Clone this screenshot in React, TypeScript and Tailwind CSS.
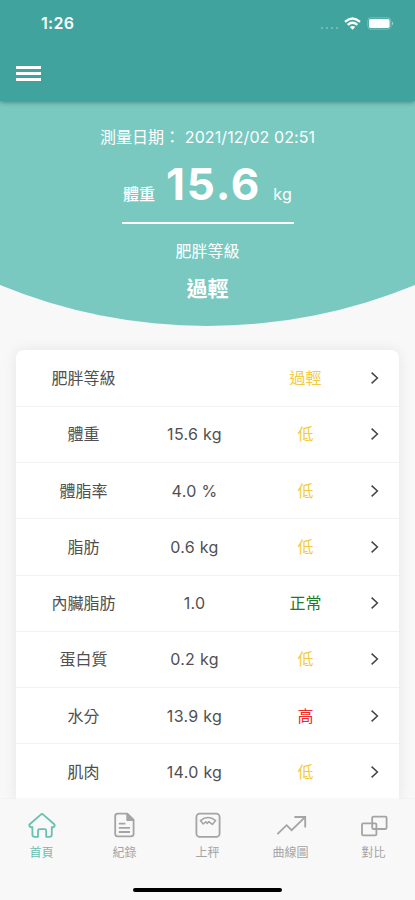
import React from "react";

type Measure = {
  label: string;
  value?: string;
  status: string;
  color: string;
};

const YELLOW = "text-[#f3cb3d]";

const measures: Measure[] = [
  { label: "肥胖等級", status: "過輕", color: YELLOW },
  { label: "體重", value: "15.6 kg", status: "低", color: YELLOW },
  { label: "體脂率", value: "4.0 %", status: "低", color: YELLOW },
  { label: "脂肪", value: "0.6 kg", status: "低", color: YELLOW },
  { label: "內臟脂肪", value: "1.0", status: "正常", color: "text-[#1f7a26]" },
  { label: "蛋白質", value: "0.2 kg", status: "低", color: YELLOW },
  { label: "水分", value: "13.9 kg", status: "高", color: "text-[#ee2a2a]" },
  { label: "肌肉", value: "14.0 kg", status: "低", color: YELLOW },
];

const HomeIcon = () => (
  <path d="M14 2 Q14.6 2 15.2 2.6 L26 12 Q27.4 13.4 26 14.8 Q25.2 15.5 23.8 15.1 V22.4 Q23.8 24.8 21.4 24.8 H18.2 V19 Q18.2 17.2 16.6 17.2 H11.6 Q10 17.2 10 19 V24.8 H6.8 Q4.4 24.8 4.4 22.4 V15.1 Q2.8 15.5 2 14.8 Q.6 13.4 2 12 L12.8 2.6 Q13.4 2 14 2 Z" />
);

const RecordIcon = () => (
  <>
    <path d="M6.8 1.6 H16.2 L22.6 8 V21.8 Q22.6 24.4 20 24.4 H6.8 Q4.2 24.4 4.2 21.8 V4.2 Q4.2 1.6 6.8 1.6 Z" />
    <path d="M16.2 1.8 V8 H22.4 Z" fill="currentColor" />
    <path d="M7.8 11.6 H14.4 M7.8 15.8 H19 M7.8 20 H19" />
  </>
);

const ScaleIcon = () => (
  <>
    <rect x="2.4" y="1.6" width="23.2" height="23.2" rx="3.4" />
    <path d="M6.4 8.6 Q14 2.4 21.6 8.6 L18.4 12.4 L14.8 9.6 L13.2 11.4 L11.8 9.8 L9.2 12 Z" strokeWidth="1.5" />
  </>
);

const ChartIcon = () => (
  <path d="M.4 22.2 L9.6 13.2 L14.6 18.2 L27.8 5.4 M17.4 5 H28.2 V15.6" strokeLinejoin="miter" />
);

const CompareIcon = () => (
  <>
    <rect x="2" y="11.4" width="14.4" height="12" rx="1.2" />
    <rect x="12.2" y="4.6" width="14.4" height="12.4" rx="1.2" />
  </>
);

const tabs = [
  { label: "首頁", icon: HomeIcon, active: true },
  { label: "紀錄", icon: RecordIcon, active: false },
  { label: "上秤", icon: ScaleIcon, active: false },
  { label: "曲線圖", icon: ChartIcon, active: false },
  { label: "對比", icon: CompareIcon, active: false },
];

const Header: React.FC = () => (
  <header className="relative z-10 h-[101px] shrink-0 bg-[#40a39d] text-white shadow-[0_1px_5px_rgba(0,0,0,0.4)]">
    <div className="flex h-[46px] items-center justify-between pl-[41px] pr-[21px]">
      <span className="text-[16px] font-semibold leading-none tracking-[0.3px]">1:26</span>
      <div className="flex items-center">
        <div className="mr-[6px] mt-[9px] flex gap-[3px] opacity-35">
          <span className="h-[2px] w-[2px] rounded-full bg-white" />
          <span className="h-[2px] w-[2px] rounded-full bg-white" />
          <span className="h-[2px] w-[2px] rounded-full bg-white" />
          <span className="h-[2px] w-[2px] rounded-full bg-white" />
        </div>
        <svg width="17" height="13" viewBox="0 0 17 13" fill="none" stroke="currentColor" strokeWidth="2.3">
          <path d="M1 4.8 Q8.5 -1.8 16 4.8" />
          <path d="M3.7 7.8 Q8.5 3.7 13.3 7.8" />
          <path d="M8.5 12.7 L5.8 10 Q8.5 7.8 11.2 10 Z" fill="currentColor" stroke="none" />
        </svg>
        <svg className="ml-[6px]" width="27" height="13" viewBox="0 0 27 13">
          <rect x=".8" y=".8" width="23" height="11.4" rx="3" fill="none" stroke="white" strokeOpacity=".3" />
          <rect x="2" y="2" width="20.6" height="9" rx="1.8" fill="white" />
          <path d="M25 4.5 Q27.4 6.5 25 8.5 Z" fill="white" fillOpacity=".5" />
        </svg>
      </div>
    </div>
    <button className="ml-4 mt-[20px] flex w-[25px] flex-col gap-[3px]" aria-label="menu">
      <span className="h-[3px] w-full bg-white" />
      <span className="h-[3px] w-full bg-white" />
      <span className="h-[3px] w-full bg-white" />
    </button>
  </header>
);

const Summary: React.FC = () => (
  <section className="flex h-[225px] shrink-0 flex-col items-center bg-[#79c9c1] pt-[24px] text-white [clip-path:circle(546px_at_50%_-321px)]">
    <div className="flex h-6 items-center whitespace-pre text-[16px] tracking-[0.08px]">測量日期： 2021/12/02 02:51</div>
    <div className="mt-[9px] flex h-[52px] items-baseline leading-[52px]">
      <span className="text-[16px] font-medium">體重</span>
      <span className="ml-[11px] text-[44px] font-bold tracking-[1.8px]">15.6</span>
      <span className="ml-[12px] text-[16px] tracking-[0.3px]">kg</span>
    </div>
    <div className="mt-[12px] h-[1.5px] w-[172px] bg-white" />
    <div className="mt-[15.5px] flex h-6 items-center text-[16px]">肥胖等級</div>
    <div className="mt-[12px] flex h-7 items-center text-[21px] font-bold">過輕</div>
  </section>
);

const MeasureRow: React.FC<{ item: Measure }> = ({ item }) => (
  <li className="flex h-[56.25px] items-center border-b border-[#f2f2f2] pl-3 pr-[10px] text-[16px] text-[#505050]">
    <span className="w-[111px] text-center">{item.label}</span>
    <span className="w-[111px] text-center tracking-[0.3px]">{item.value}</span>
    <span className={`w-[111px] text-center ${item.color}`}>{item.status}</span>
    <svg className="ml-[9px]" width="10" height="14" viewBox="0 0 10 14" fill="none" stroke="#444" strokeWidth="1.5">
      <path d="M1.6 1.6 L7.4 7 L1.6 12.4" />
    </svg>
  </li>
);

const TabBar: React.FC = () => (
  <nav className="relative z-10 flex h-[101px] shrink-0 flex-col items-center bg-[#f8f8f8] shadow-[0_-1px_1px_rgba(0,0,0,0.02)]">
    <div className="flex w-full">
      {tabs.map(({ label, icon: Icon, active }) => (
        <button
          key={label}
          className={`flex flex-1 flex-col items-center pt-[13px] ${active ? "text-[#69c0b0]" : "text-[#a4a4a4]"}`}
        >
          <svg width="28" height="28" viewBox="0 0 28 28" fill="none" stroke="currentColor" strokeWidth="1.8" strokeLinejoin="round" overflow="visible">
            <Icon />
          </svg>
          <span className="mt-[5px] text-[12px] leading-4">{label}</span>
        </button>
      ))}
    </div>
    <div className="mb-[8px] mt-auto h-[4px] w-[149px] rounded-full bg-black" />
  </nav>
);

export default function App() {
  return (
    <div className="flex h-[900px] w-full flex-col overflow-hidden bg-[#f8f8f8] font-['Inter','Noto_Sans_CJK_TC',sans-serif]">
      <Header />
      <main className="flex min-h-0 flex-1 flex-col overflow-hidden">
        <Summary />
        <div className="px-4 pt-6">
          <ul className="rounded-t-[8px] bg-white pt-[0.6px] shadow-[0_0_14px_rgba(0,0,0,0.08)]">
            {measures.map((item) => (
              <MeasureRow key={item.label} item={item} />
            ))}
          </ul>
        </div>
      </main>
      <TabBar />
    </div>
  );
}
